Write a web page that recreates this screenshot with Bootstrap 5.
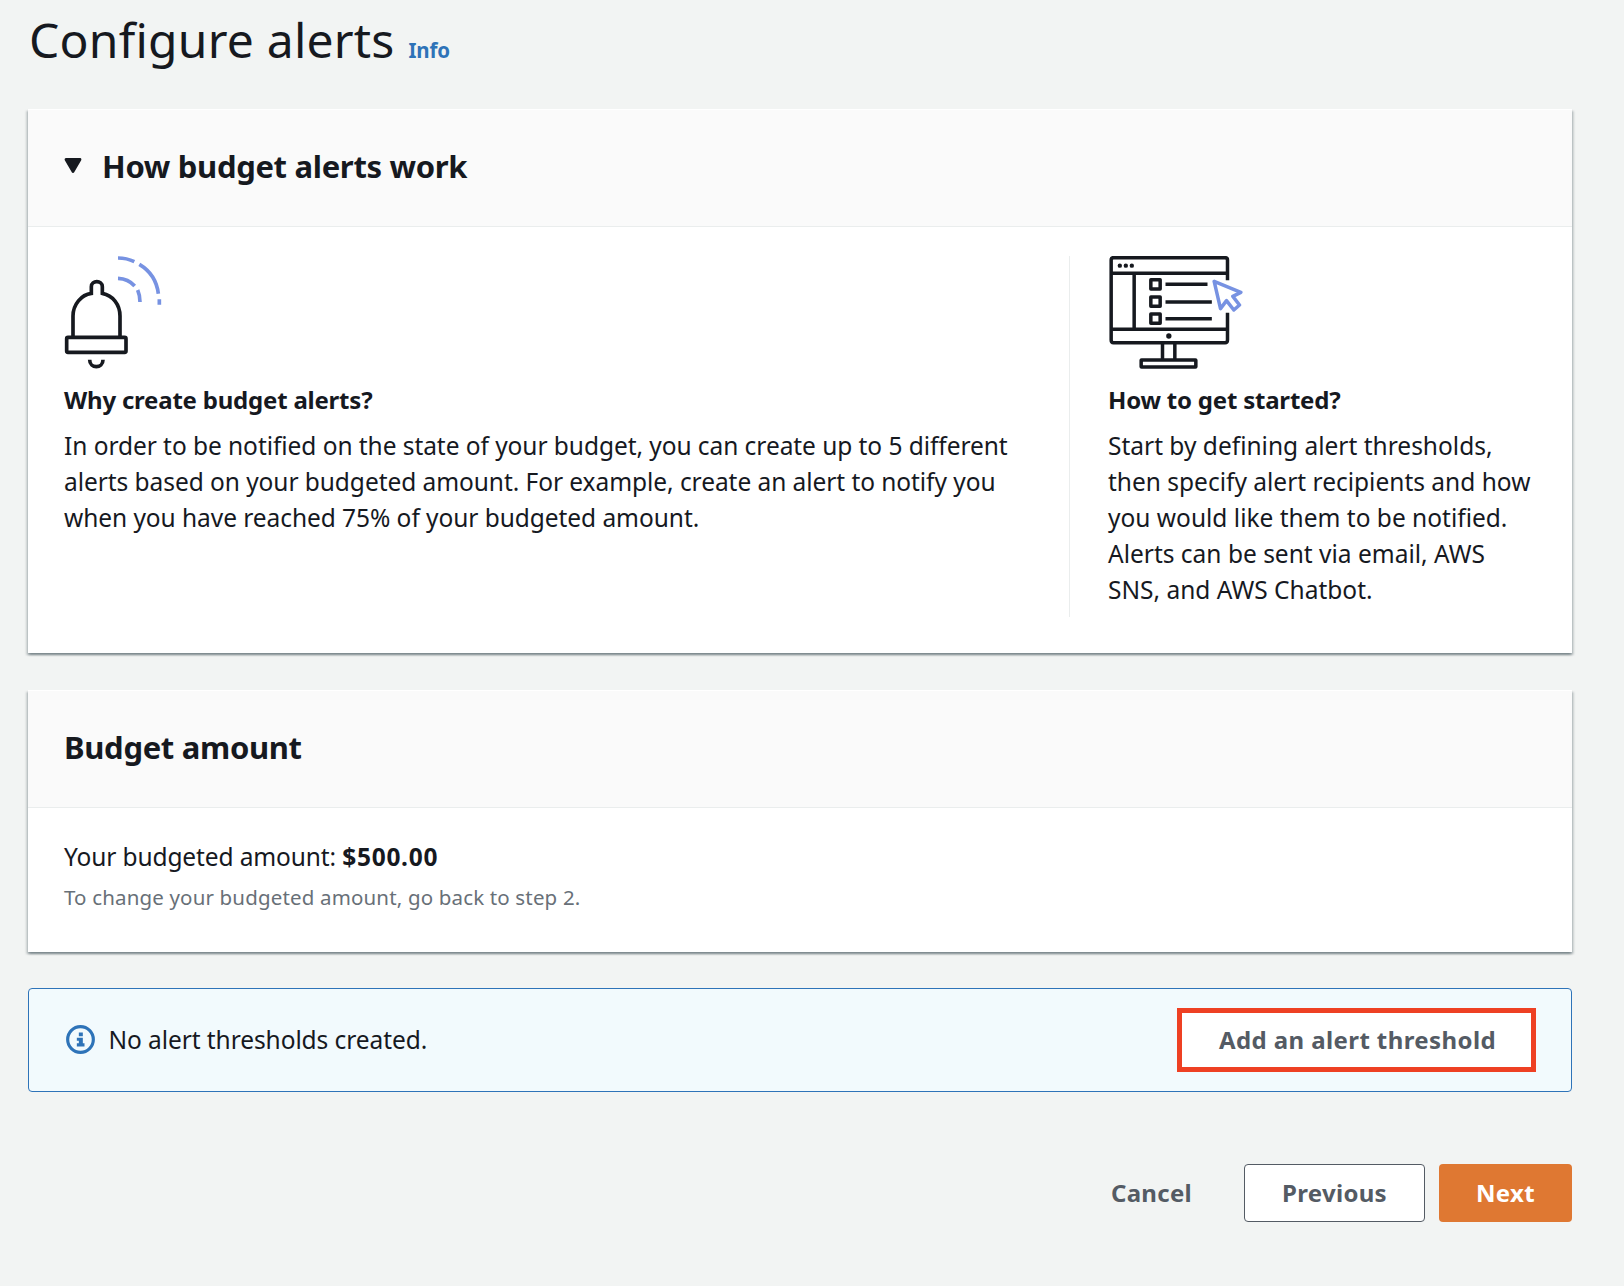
<!DOCTYPE html>
<html lang="en">
<head>
<meta charset="utf-8">
<meta name="viewport" content="width=device-width, initial-scale=1">
<title>Configure alerts</title>
<link href="https://cdn.jsdelivr.net/npm/bootstrap@5.3.0/dist/css/bootstrap.min.css" rel="stylesheet">
<style>
body{background:#f2f4f3;color:#16191f;font-family:"Noto Sans","Open Sans",sans-serif;font-size:24.5px;line-height:36px;font-variant-ligatures:none}
.page{padding:10px 52px 0 28px}
.page-title{font-size:48px;line-height:60px;font-weight:400;letter-spacing:.22px;margin:0 0 39px 1px;gap:14px}
.info-link{font-size:20.5px;line-height:1;font-weight:700;color:#2e73b8;text-decoration:none;letter-spacing:-.2px}
.panel{border:0;border-radius:0;color:inherit;margin-bottom:36px;box-shadow:0 2px 2px rgba(0,28,36,.3),2px 2px 2px rgba(0,28,36,.15),-2px 2px 2px rgba(0,28,36,.15)}
.panel-how{margin-bottom:37px}
.panel>.card-header{background:#fafafa;border-top:1px solid #fff;border-bottom:1px solid #eaeded;border-radius:0;padding:36px 36px 40px}
.panel h2{font-size:31px;line-height:40px;font-weight:700;letter-spacing:-.32px;margin:0}
.caret{width:18px;height:16px;margin:0 20px 0 0}
.how-body{padding:29px 36px 36px}
.why-col{width:1005px;flex:none}
.start-col{border-left:1px solid #eaeded;padding-left:38px}
.why-col,.start-col{padding-bottom:9px}
.figure-box{height:126px}
.panel h3{font-size:24px;line-height:36px;font-weight:700;letter-spacing:-.21px;margin:0 0 10px}
.why-col p{letter-spacing:-.06px}
.start-col p{letter-spacing:0}
.amount-body{padding:31px 36px 39px}
.amount-line{letter-spacing:-.12px}
.amount-line strong{letter-spacing:.7px}
.hint{font-size:20.5px;line-height:32px;color:#687078;letter-spacing:.16px;margin-top:5.5px}
.notice{background:#f2fafd;border:1px solid #2e73b8;border-radius:4px;height:104px;padding:0 35px 0 36.5px;margin:0 0 72px;color:inherit;letter-spacing:-.08px}
.notice svg{width:29px;height:29px;margin-right:14px}
.btn-act{font-size:24px;line-height:36px;font-weight:700;letter-spacing:.3px;height:58px;border-radius:4px;padding:0;color:#545b64;white-space:nowrap}
.btn-add{width:359px;height:64px;border:5.5px solid #ee4023;border-radius:0;background:#fff;letter-spacing:.4px;padding-left:2px}
.btn-cancel{border:0;margin-right:52px}
.btn-prev{width:181px;background:#fff;border:1px solid #545b64;margin-right:14px}
.btn-next{width:133px;background:#df7832;border:0;color:#fff}
</style>
</head>
<body>
<main class="page">
  <h1 class="page-title d-flex align-items-baseline">Configure alerts <a class="info-link" href="#">Info</a></h1>

  <section class="card panel panel-how">
    <div class="card-header d-flex align-items-center">
      <svg class="caret" viewBox="0 0 18 16"><path d="M2 1.5H16L9 13.5Z" fill="#16191f" stroke="#16191f" stroke-width="2.8" stroke-linejoin="round"/></svg>
      <h2>How budget alerts work</h2>
    </div>
    <div class="card-body how-body d-flex">
      <div class="why-col">
        <div class="figure-box">
          <svg class="d-block" width="100" height="114" viewBox="42 48 300 342" fill="none" stroke="#16191f" stroke-width="11">
            <path d="M69 290V228C69 193 94 164 124 160V140C124 120 157 120 157 140V160C188 166 210 193 210 228V290"/>
            <rect x="50" y="292" width="178" height="45" rx="4"/>
            <path d="M119 359C119 387 159 387 159 359"/>
            <g stroke="#7792e2"><path d="M204 54Q230 54 253 65M268 73Q318 103 325 161M328 178V194M204 115Q235 116 254 138M263 150Q270 166 270 186"/></g>
          </svg>
        </div>
        <h3>Why create budget alerts?</h3>
        <p class="mb-0">In order to be notified on the state of your budget, you can create up to 5 different<br>alerts based on your budgeted amount. For example, create an alert to notify you<br>when you have reached 75% of your budgeted amount.</p>
      </div>
      <div class="start-col flex-grow-1 text-nowrap">
        <div class="figure-box">
          <svg class="d-block" width="135" height="114" viewBox="142.5 48 405 342" fill="none" stroke="#16191f" stroke-width="10.5">
            <path d="M501 121V60Q501 53 494 53H159Q152 53 152 60V300Q152 308 159 308H494Q501 308 501 300V218"/>
            <path d="M152 100H501M221 100V268M152 268H501M306 308V358M343 308V358"/>
            <rect x="242" y="360" width="164" height="21" rx="1"/>
            <path d="M271 119H299V147H271ZM271 171H299V199H271ZM271 222H299V250H271Z" stroke-linejoin="round"/>
            <path d="M315 133H441M315 186H454M315 236H454"/>
            <g fill="#16191f" stroke="none"><circle cx="178" cy="77" r="6.5"/><circle cx="196" cy="77" r="6.5"/><circle cx="214" cy="77" r="6.5"/><circle cx="325" cy="288" r="8"/></g>
            <path d="M461 124L541 157L517 169L537 195L520 210L498 182L480 206Z" stroke="#7792e2" stroke-linejoin="round"/>
          </svg>
        </div>
        <h3>How to get started?</h3>
        <p class="mb-0">Start by defining alert thresholds,<br>then specify alert recipients and how<br>you would like them to be notified.<br>Alerts can be sent via email, AWS<br>SNS, and AWS Chatbot.</p>
      </div>
    </div>
  </section>

  <section class="card panel">
    <div class="card-header"><h2>Budget amount</h2></div>
    <div class="card-body amount-body">
      <div class="amount-line">Your budgeted amount: <strong>$500.00</strong></div>
      <div class="hint">To change your budgeted amount, go back to step 2.</div>
    </div>
  </section>

  <div class="alert notice d-flex align-items-center" role="status">
    <svg viewBox="137.5 166.5 87 87"><circle cx="181" cy="210" r="38.5" fill="none" stroke="#2e73b8" stroke-width="9.5"/><path fill="#2e73b8" d="M176 189H188V200H176ZM170 205H188V221H193V231H170V221H176V214H170Z"/></svg>
    <span>No alert thresholds created.</span>
    <button class="btn btn-act btn-add ms-auto" type="button">Add an alert threshold</button>
  </div>

  <div class="d-flex justify-content-end">
    <button class="btn btn-act btn-cancel" type="button">Cancel</button>
    <button class="btn btn-act btn-prev" type="button">Previous</button>
    <button class="btn btn-act btn-next" type="button">Next</button>
  </div>
</main>
<script src="https://cdn.jsdelivr.net/npm/bootstrap@5.3.0/dist/js/bootstrap.bundle.min.js"></script>
</body>
</html>
